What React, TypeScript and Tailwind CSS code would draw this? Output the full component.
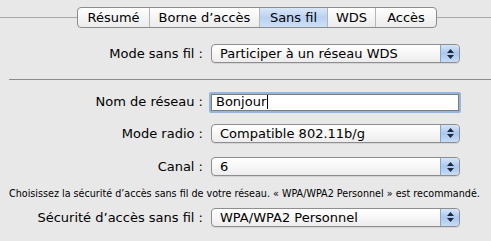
import React from 'react'

const tabs = [
  { label: 'Résumé', w: 'w-[71px]' },
  { label: 'Borne d’accès', w: 'w-[110px]' },
  { label: 'Sans fil', w: 'w-[68px]' },
  { label: 'WDS', w: 'w-[48px]' },
  { label: 'Accès', w: 'w-[61px]' },
]
const font = { fontFamily: '"DejaVu Sans", "Lucida Grande", sans-serif' }

function Stepper() {
  return (
    <div className="flex h-full w-[19px] flex-col items-center justify-center gap-[2px] rounded-r-[4px] border-l border-[#8ea3c0] bg-gradient-to-b from-[#d6e5f8] via-[#a9c7ee] to-[#c7dcf7]">
      <svg width="7" height="4" viewBox="0 0 7 4">
        <path d="M3.5 0 L7 4 L0 4 Z" fill="#1c2a3c" />
      </svg>
      <svg width="7" height="4" viewBox="0 0 7 4">
        <path d="M0 0 L7 0 L3.5 4 Z" fill="#1c2a3c" />
      </svg>
    </div>
  )
}

function Popup({ value }: { value: string }) {
  return (
    <div className="flex h-[19px] w-[249px] items-center overflow-hidden rounded-[4px] border border-[#8e8e8e] bg-gradient-to-b from-white via-[#f7f7f7] to-[#ececec] shadow-[0_1px_0_rgba(0,0,0,0.08)]">
      <span className="flex-1 pl-[8px] text-[13px] leading-none text-black">{value}</span>
      <Stepper />
    </div>
  )
}

function Row({ label, children }: { label: string; children: React.ReactNode }) {
  return (
    <div className="flex items-center">
      <div className="w-[204px] pr-[1px] text-right text-[13px] text-black">{label}</div>
      <div className="pl-[7px]">{children}</div>
    </div>
  )
}

export default function App() {
  return (
    <div className="h-[241px] w-[491px] overflow-hidden bg-[#e8e8e8] text-black" style={font}>
      <div className="flex items-center pt-[7px]">
        <div className="h-px w-[77px] bg-[#a9a9a9]" />
        <div className="flex h-[21px] overflow-hidden rounded-[4px] border border-[#8c8c8c] bg-gradient-to-b from-white to-[#ebebeb] text-[13px]">
          {tabs.map((t, i) => (
            <div
              key={t.label}
              className={
                'flex items-center justify-center ' +
                t.w +
                (i > 0 ? ' border-l border-[#b5b5b5]' : '') +
                (t.label === 'Sans fil' ? ' bg-gradient-to-b from-[#dbe8f8] via-[#b9d1f1] to-[#cfe0f7]' : '')
              }
            >
              {t.label}
            </div>
          ))}
        </div>
        <div className="h-px flex-1 bg-[#a9a9a9]" />
      </div>

      <div className="mt-[16px]">
        <Row label="Mode sans fil :">
          <Popup value="Participer à un réseau WDS" />
        </Row>
      </div>

      <div className="ml-[9px] mt-[15px] h-px bg-[#8a8a8a]" />

      <div className="mt-[12px]">
        <Row label="Nom de réseau :">
          <div className="-ml-[2px] flex h-[21px] w-[252px] items-center rounded-[2px] border-2 border-[#95b4de] bg-white">
            <div className="flex h-full flex-1 items-center border border-[#7d7d7d] pl-[4px] text-[13px]">
              Bonjour<span className="ml-px inline-block h-[14px] w-px bg-black" />
            </div>
          </div>
        </Row>
      </div>
      <div className="mt-[11px]">
        <Row label="Mode radio :">
          <Popup value="Compatible 802.11b/g" />
        </Row>
      </div>
      <div className="mt-[14px]">
        <Row label="Canal :">
          <Popup value="6" />
        </Row>
      </div>

      <p className="mt-[11px] whitespace-nowrap pl-[9px] text-[9.6px] leading-[12px] text-black">
        Choisissez la sécurité d’accès sans fil de votre réseau. « WPA/WPA2 Personnel » est recommandé.
      </p>

      <div className="mt-[8px]">
        <Row label="Sécurité d’accès sans fil :">
          <Popup value="WPA/WPA2 Personnel" />
        </Row>
      </div>
    </div>
  )
}
